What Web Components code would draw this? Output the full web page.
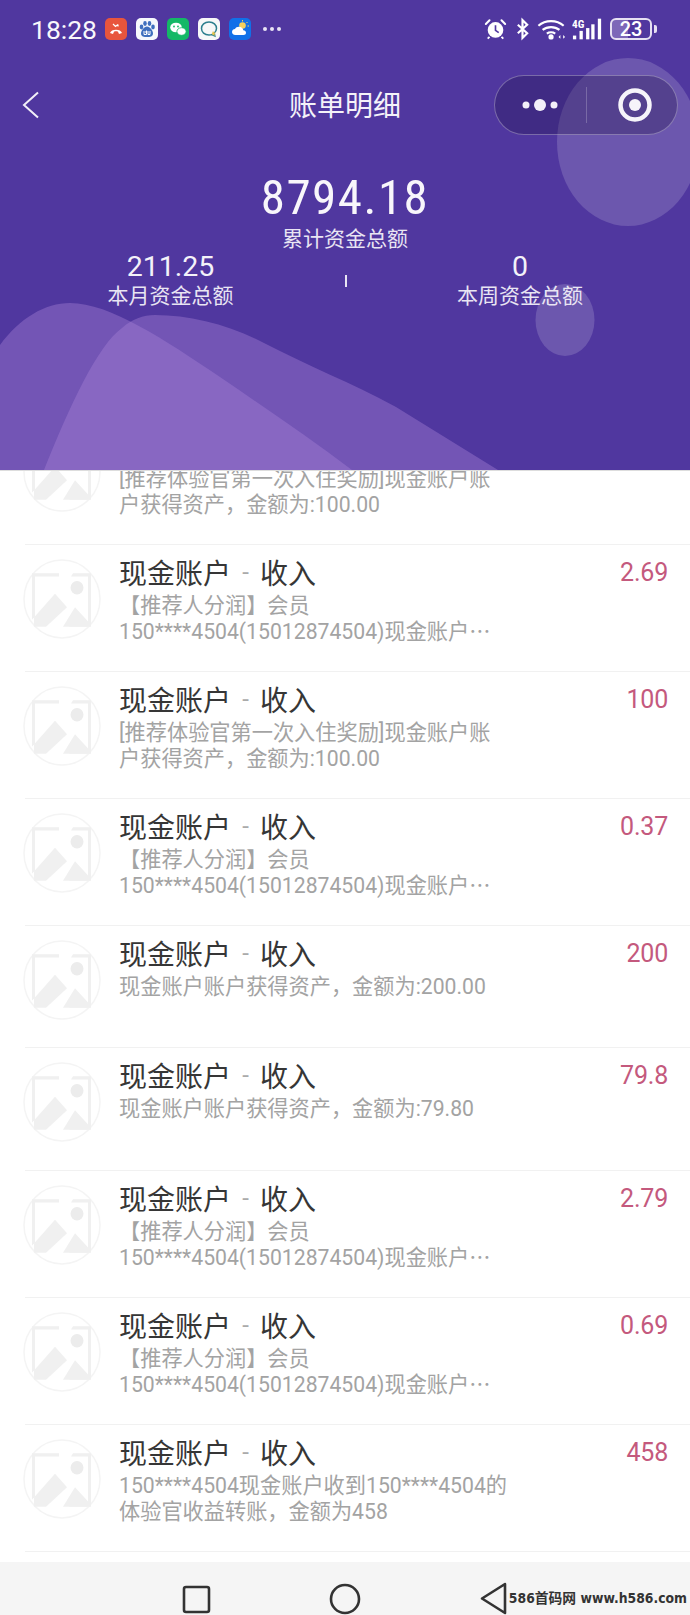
<!DOCTYPE html>
<html lang="zh-CN"><head><meta charset="utf-8"><title>账单明细</title>
<style>
html,body{margin:0;padding:0;background:#fff}
body{width:690px;height:1615px;overflow:hidden;font-family:Roboto,"Noto Sans CJK SC",sans-serif;position:relative}
.e{font-family:"Noto Sans CJK SC",sans-serif;line-height:0}
</style></head><body>
<bill-page>
  <bill-header slot="header" total="8794.18" month="211.25" week="0"></bill-header>
  <bill-row amount="2.69">[推荐体验官第一次入住奖励]现金账户账户获得资产，金额为:100.00</bill-row>
  <bill-row amount="2.69">【推荐人分润】会员<br>150****4504(15012874504)现金账户<span class="e">…</span></bill-row>
  <bill-row amount="100">[推荐体验官第一次入住奖励]现金账户账户获得资产，金额为:100.00</bill-row>
  <bill-row amount="0.37">【推荐人分润】会员<br>150****4504(15012874504)现金账户<span class="e">…</span></bill-row>
  <bill-row amount="200">现金账户账户获得资产，金额为:200.00</bill-row>
  <bill-row amount="79.8">现金账户账户获得资产，金额为:79.80</bill-row>
  <bill-row amount="2.79">【推荐人分润】会员<br>150****4504(15012874504)现金账户<span class="e">…</span></bill-row>
  <bill-row amount="0.69">【推荐人分润】会员<br>150****4504(15012874504)现金账户<span class="e">…</span></bill-row>
  <bill-row amount="458">150****4504现金账户收到150****4504的体验官收益转账，金额为458</bill-row>
  <nav-keys slot="keys"></nav-keys>
</bill-page>
<script>
const def=(name,html,init)=>customElements.define(name,class extends HTMLElement{
  connectedCallback(){ if(this.shadowRoot)return; const r=this.attachShadow({mode:'open'}); r.innerHTML=typeof html==='function'?html(this):html; init&&init(r,this);}
});

def('bill-page',`<style>
:host{display:block;position:relative;width:690px;height:1615px;overflow:hidden;background:#fff}
.list{padding-top:417.500px;height:1144px;overflow:hidden}
.over{position:absolute;left:0;top:0;right:0;z-index:2}
.keys{position:absolute;left:0;right:0;bottom:0;z-index:2}
</style>
<div class="list"><slot></slot></div>
<div class="over"><slot name="header"></slot></div>
<div class="keys"><slot name="keys"></slot></div>`);

def('status-bar',`<style>
:host{display:flex;align-items:center;height:60px;padding:0 32px 2px 31px;box-sizing:border-box;color:#fff}
.time{font:400 26.500px/1 Roboto,sans-serif;width:74px;position:relative;top:1px;opacity:.96}
.apps{display:flex;gap:9px}
.apps svg{width:22px;height:22px;display:block}
.more{display:flex;gap:3px;margin-left:12px}
.more i{width:4px;height:4px;border-radius:50%;background:#e9e4f5}
.right{margin-left:auto;display:flex;align-items:center}
.right svg{display:block}
</style>
<div class="time">18:28</div>
<div class="apps">
<svg viewBox="0 0 22 22"><rect width="22" height="22" rx="5" fill="#e8553d"/><path d="M5 15c1-4.500 11-4.500 12 0l-3 1-1-2.300c-1-.5-3-.5-4 0L8 16z" fill="#fff"/><path d="M8 6l2.500 2.500L13 6.500M13 6.500v2" fill="none" stroke="#fff" stroke-width="1.200"/></svg>
<svg viewBox="0 0 22 22"><rect width="22" height="22" rx="5" fill="#f6f8fd"/><g fill="#3f6fbe"><ellipse cx="5.500" cy="9" rx="1.800" ry="2.400"/><ellipse cx="9" cy="5.500" rx="1.800" ry="2.400"/><ellipse cx="13.500" cy="5.500" rx="1.800" ry="2.400"/><ellipse cx="17" cy="9" rx="1.800" ry="2.400"/><path d="M11 8.500c3 0 6 4 6 7 0 3-3 3.500-6 3.500s-6-.5-6-3.500c0-3 3-7 6-7z"/></g><path d="M8 13v3.500h2.500v-4M9 14h1.500M12 13v3.500h2V13" fill="none" stroke="#fff" stroke-width="1"/></svg>
<svg viewBox="0 0 22 22"><rect width="22" height="22" rx="5" fill="#14b866"/><ellipse cx="9" cy="9.500" rx="5.800" ry="4.800" fill="#fff"/><ellipse cx="14.500" cy="13.500" rx="4.600" ry="3.800" fill="#fff" stroke="#14b866" stroke-width=".8"/><circle cx="7" cy="8.500" r=".9" fill="#14b866"/><circle cx="11" cy="8.500" r=".9" fill="#14b866"/></svg>
<svg viewBox="0 0 22 22"><rect width="22" height="22" rx="5" fill="#f7f8f8"/><path d="M11 4c-4.500 0-7.500 2.800-7.500 6.500 0 3.700 3 6.500 7.500 6.500 1 0 2-.1 2.800-.4l3 1.400-.6-3c1.300-1.200 2.300-2.700 2.300-4.500C18.500 6.800 15.500 4 11 4z" fill="none" stroke="#2d7f8e" stroke-width="1.500"/><path d="M15 13l1 1.500 1.800.3-1.300 1.200.3 1.800-1.800-.8-1.200-1z" fill="#e6c34d"/></svg>
<svg viewBox="0 0 22 22"><rect width="22" height="22" rx="5" fill="#1170e8"/><circle cx="13.500" cy="7.500" r="3.300" fill="#f3d15d"/><path d="M13.500 2v1.500M18.500 4l-1 1M20 8h-1.500" stroke="#f3d15d" stroke-width="1"/><path d="M6.500 17C4 17 3 15.500 3 14c0-1.800 1.500-3 3-3 .7-1.500 2.200-2.300 4-2.300 2.200 0 4 1.500 4.300 3.500 1.600.1 2.700 1.200 2.700 2.500 0 1.300-1 2.300-2.500 2.300z" fill="#fff"/></svg>
</div>
<div class="more"><i></i><i></i><i></i></div>
<div class="right">
<svg width="23" height="24" viewBox="0 0 25 24" style="margin-right:8px"><circle cx="12.500" cy="13" r="8.500" fill="#fff"/><path d="M12.500 8v5.500l3.500 2.500" fill="none" stroke="#50379f" stroke-width="1.800"/><path d="M2 6.500 6 2.500M23 6.500l-4-4" stroke="#fff" stroke-width="2.200" stroke-linecap="round"/><path d="M6 20.500l-2 2M19 20.500l2 2" stroke="#fff" stroke-width="2"/></svg>
<svg width="15" height="24" viewBox="0 0 16 24" style="margin-right:7px"><path d="M3 7.500l10 9-5 5V2.500l5 5-10 9" fill="none" stroke="#fff" stroke-width="2.300"/></svg>
<svg width="29" height="24" viewBox="0 0 31 24" style="margin-right:6px"><g fill="none" stroke="#fff" stroke-width="2.300"><path d="M1.500 8.500c7.500-6.500 19.500-6.500 27 0"/><path d="M6 13c5-4 13-4 18 0"/><path d="M10.500 17c2.500-1.800 6.500-1.800 9 0"/></g><circle cx="15" cy="20.500" r="2.800" fill="#fff"/><path d="M23 20.500l2-2v4zM30 20.500l-2-2v4z" fill="#fff"/></svg>
<svg width="31" height="24" viewBox="0 0 33 24" style="margin-right:7px"><text x="0" y="10.500" font-family="Roboto Condensed,Roboto,sans-serif" font-size="12" font-weight="700" fill="#fff">4G</text><g fill="#fff"><rect x="1" y="19" width="3.500" height="4"/><rect x="8" y="14" width="3.500" height="9"/><rect x="15" y="11" width="3.500" height="12"/><rect x="20.500" y="7" width="3.500" height="16"/><rect x="27.500" y="1" width="3.500" height="22"/></g></svg>
<div style="position:relative;width:42px;height:22px;margin-right:6px;box-sizing:border-box;border:2px solid #e6e0f2;border-radius:6px;font:500 20px/18px Roboto,sans-serif;text-align:center;color:#fff;background:linear-gradient(90deg,#7d68b8 0 42%,transparent 42%)">23<i style="position:absolute;right:-6.500px;top:5px;width:2.500px;height:8px;background:#e6e0f2;border-radius:0 2px 2px 0"></i></div>
</div>`);

def('title-bar',`<style>
:host{display:block;position:relative;height:90px;color:#fff}
.row{display:grid;grid-template-columns:1fr auto 1fr;align-items:center;height:60px;padding:15px 12px}
h1{margin:0;font:400 28px/1 "Noto Sans CJK SC",sans-serif;color:#f4f2f9;position:relative;top:-1px}
.back{display:block;margin-left:10px}
.cap{justify-self:end;display:flex;align-items:center;width:184px;height:60px;box-sizing:border-box;border:1px solid rgba(255,255,255,.3);border-radius:30px;background:rgba(30,15,70,.3)}
.cap>div{flex:1;display:flex;align-items:center;justify-content:center}
.cap>div:last-child svg{margin-right:-6px}
.cap .sep{flex:none;width:1px;height:36px;background:rgba(255,255,255,.22)}
.cap svg{display:block}
</style>
<div class="row">
<svg class="back" width="18" height="28" viewBox="0 0 18 28"><path d="M16 1.500 2 14l14 12.500" fill="none" stroke="#f2eff8" stroke-width="2"/></svg>
<h1>账单明细</h1>
<div class="cap"><div><svg width="40" height="14" viewBox="0 0 40 14"><circle cx="6" cy="7" r="3.500" fill="#f3f0f9"/><circle cx="20" cy="7" r="6" fill="#f3f0f9"/><circle cx="34" cy="7" r="3.500" fill="#f3f0f9"/></svg></div><span class="sep"></span><div><svg width="36" height="36" viewBox="0 0 36 36"><circle cx="18" cy="18" r="14.500" fill="none" stroke="#f6f4fa" stroke-width="4.500"/><circle cx="18" cy="18" r="6" fill="#f6f4fa"/></svg></div></div>
</div>`);

def('stat-block',h=>`<style>
:host{display:block;text-align:center;color:#f4f2f9}
.v{font:400 28.500px/26px Roboto,sans-serif;padding-top:4px}
.l{font:400 21px/28px "Noto Sans CJK SC",sans-serif;color:#e9e5f3}
</style><div class="v">${h.getAttribute('value')}</div><div class="l">${h.getAttribute('label')}</div>`);

def('bill-header',h=>`<style>
:host{display:block;position:relative;height:470px;background:#50379f;overflow:hidden;box-shadow:0 1px 0 #ddd}
.deco{position:absolute;left:0;top:0}
.fg{position:relative}
.big{text-align:center;font:400 49px/46px "Roboto Condensed",Roboto,sans-serif;color:#f8f6fb;margin-top:24.500px;letter-spacing:1.500px}
.lab{text-align:center;font:400 21px/28px "Noto Sans CJK SC",sans-serif;color:#e9e5f3;margin-top:2.500px}
.cols{display:flex;margin-top:-1px}
.cols stat-block:first-child{flex:none;width:341px}
.cols stat-block:last-child{flex:none;width:346px}
.bar{flex:none;width:2px;height:12px;background:#e9e5f3;margin:25px 0 0 4px}
</style>
<svg class="deco" width="690" height="470" viewBox="0 0 690 470">
<g fill="#fff" fill-opacity=".16">
<ellipse cx="628" cy="142" rx="71" ry="84"/>
<ellipse cx="565" cy="320" rx="29.500" ry="36"/>
</g>
<g fill="#a782d6" fill-opacity=".4">
<path d="M0 345C20 318 45 303 70 303C110 303 165 340 220 377C265 408 310 438 352 470H0Z"/>
<path d="M44 470C70 405 98 345 122 328C132 319 143 315 155 315C190 315 230 325 264 343C310 367 350 382 396 407L498 470Z"/>
</g></svg>
<div class="fg">
<status-bar></status-bar>
<title-bar></title-bar>
<div class="big">${h.getAttribute('total')}</div>
<div class="lab">累计资金总额</div>
<div class="cols"><stat-block value="${h.getAttribute('month')}" label="本月资金总额"></stat-block><span class="bar"></span><stat-block value="${h.getAttribute('week')}" label="本周资金总额"></stat-block></div>
</div>`);

def('bill-avatar',`<style>
:host{display:block;width:78px;height:80px}
svg{display:block}
</style>
<svg width="78" height="80" viewBox="0 0 78 78" preserveAspectRatio="none">
<circle cx="39" cy="39" r="38" fill="#fff" stroke="#f4f4f4" stroke-width="1.500"/>
<g fill="#f0f0f0">
<path d="M9 14H36V17H12V56L9 59ZM50 14H68V66H46L49 63H65V17H48Z"/>
<circle cx="54" cy="28" r="6.500" fill="#ececec"/>
<path d="M11 57 32 34 44 47 23 66H11Z"/>
<path d="M40 66 52 47 66 62V66Z"/>
</g></svg>`);

def('bill-row',h=>`<style>
:host{display:block;margin-left:25px}
.row{display:grid;grid-template-columns:78px 1fr auto;column-gap:16px;box-sizing:border-box;min-height:122.500px;padding:10px 22px 26px 0;border-bottom:1px solid #f1f1f1}
bill-avatar{margin:4px 0 0 -2px}
.main{min-width:0}
.t{display:flex;font:400 28px/34px "Noto Sans CJK SC",sans-serif;color:#363636}
.t i{width:29px;text-align:center;font:400 24px/34px Roboto,sans-serif;color:#aaa}
.d{width:390px;margin-top:4px;font:400 21.200px/26px Roboto,"Noto Sans CJK SC",sans-serif;color:#a3a3a3}
.a{font:400 25px/30px Roboto,sans-serif;color:#c4597d;letter-spacing:-.2px;justify-self:end;margin-top:3px}
</style>
<div class="row"><bill-avatar></bill-avatar>
<div class="main"><div class="t">现金账户<i>-</i>收入</div><div class="d"><slot></slot></div></div>
<div class="a">${h.getAttribute('amount')}</div></div>`);

def('nav-keys',`<style>
:host{display:block;position:relative;height:53px;background:#f5f5f5}
svg{display:block}
.w{position:absolute;right:3px;bottom:7px;font:700 13.800px/20px "DejaVu Sans","Noto Sans CJK SC",sans-serif;font-stretch:condensed;color:#333;white-space:nowrap}
</style>
<svg width="520" height="53" viewBox="0 0 520 53"><g fill="none" stroke="#333" stroke-width="2.600" stroke-linejoin="round">
<rect x="184" y="25" width="25" height="25" rx="2"/>
<ellipse cx="345" cy="37" rx="14" ry="14"/>
<path d="M505 22 482 36.500 505 51Z"/></g></svg>
<div class="w">586首码网 www.h586.com</div>`);
</script></body></html>
